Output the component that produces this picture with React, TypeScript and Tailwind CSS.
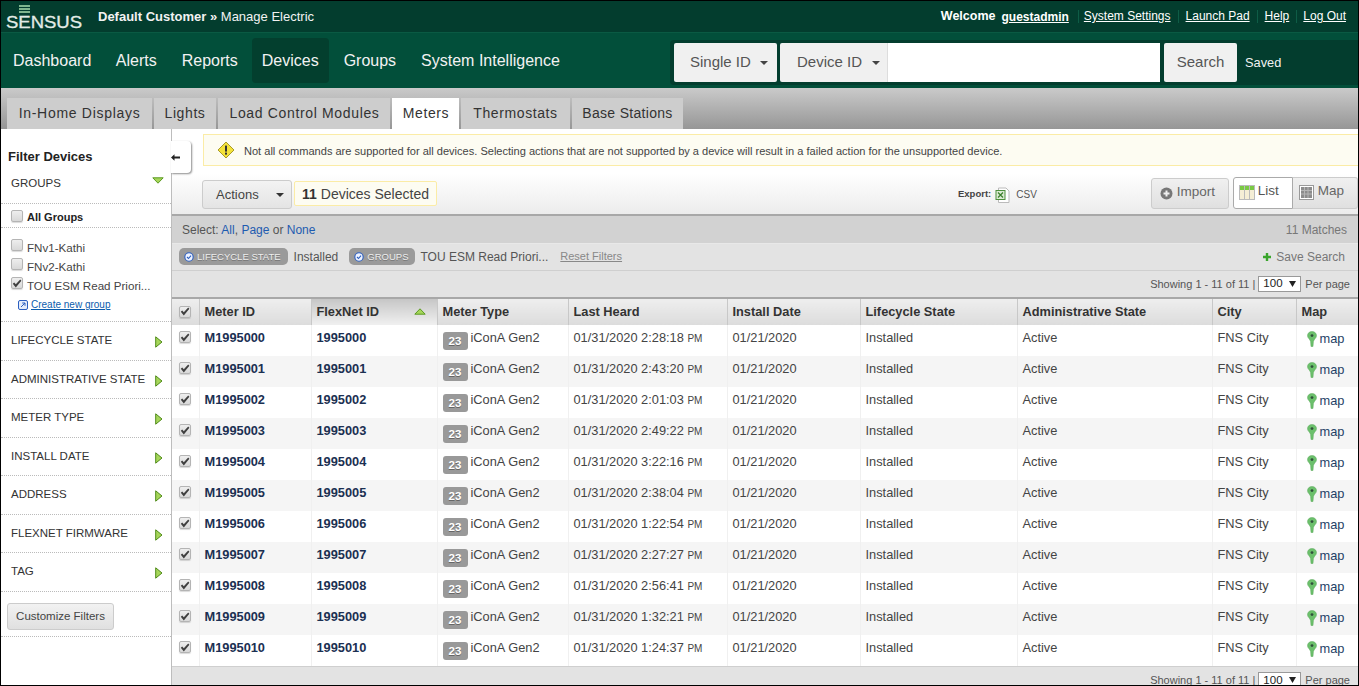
import React from "react";

const F = "[font-family:'Liberation_Sans',Arial,sans-serif]";

function Check({ on = true }: { on?: boolean }) {
  return (
    <span className="inline-flex w-[12px] h-[12px] items-center justify-center rounded-[2px] border border-[#b4b4b4] bg-[linear-gradient(#eeeeee,#d8d8d8)] shadow-[0_1px_1px_rgba(0,0,0,0.15)]">
      {on && (
        <svg width="10" height="9" viewBox="0 0 10 9">
          <path d="M0.8 4.8 L2.2 3.6 L3.8 5.2 L8.2 0.6 L9.4 1.8 L3.8 8.4 Z" fill="#3f3f3f" />
        </svg>
      )}
    </span>
  );
}

function Caret({ color = "#444" }: { color?: string }) {
  return (
    <svg width="8" height="4" viewBox="0 0 8 4" className="shrink-0">
      <path d="M0 0 H8 L4 4 Z" fill={color} />
    </svg>
  );
}

function GreenRight() {
  return (
    <svg width="8" height="12" viewBox="0 0 8 12" className="shrink-0">
      <path d="M0.7 0.8 L7 6 L0.7 11.2 Z" fill="#a6d65a" stroke="#4f8a1a" strokeWidth="1" />
    </svg>
  );
}

function GreenDown() {
  return (
    <svg width="12" height="7" viewBox="0 0 12 7" className="shrink-0">
      <path d="M0.8 0.8 H11.2 L6 6.2 Z" fill="#a6d65a" stroke="#5c9a22" strokeWidth="1" />
    </svg>
  );
}

function GreenUp() {
  return (
    <svg width="12" height="7" viewBox="0 0 12 7" className="shrink-0">
      <path d="M0.8 6.2 H11.2 L6 0.8 Z" fill="#a6d65a" stroke="#5c9a22" strokeWidth="1" />
    </svg>
  );
}

function Pin() {
  return (
    <svg width="10" height="16" viewBox="0 0 10 16" className="shrink-0">
      <path d="M5 0.5 C2.2 0.5 0.5 2.4 0.5 4.8 C0.5 7 3 8.2 3.6 10.5 L4 15.5 H6 L6.4 10.5 C7 8.2 9.5 7 9.5 4.8 C9.5 2.4 7.8 0.5 5 0.5 Z" fill="#6cc06c" stroke="#5aa85a" strokeWidth="0.5" />
      <circle cx="5" cy="4.6" r="1.4" fill="#2f4f3a" />
    </svg>
  );
}

function Badge() {
  return (
    <svg width="10" height="10" viewBox="0 0 10 10" className="shrink-0">
      <circle cx="5" cy="5" r="4.2" fill="#eef3ff" stroke="#2c5fc0" strokeWidth="1.1" />
      <path d="M3 5 L4.5 6.5 L7 3.6" fill="none" stroke="#2c5fc0" strokeWidth="1.1" />
    </svg>
  );
}

function Tag({ label }: { label: string }) {
  return (
    <span className="inline-flex items-center gap-[3px] h-[17px] pl-[5px] pr-[7px] rounded-[5px] bg-[#9a9a9a] text-[#eeeeee] text-[9.5px] leading-none [text-shadow:0_1px_0_#777]">
      <Badge />
      {label}
    </span>
  );
}

function Logo() {
  return (
    <div className="relative w-[78px] h-[32px] shrink-0">
      <div className="absolute left-[18px] top-[4px] flex flex-col gap-[1px]">
        <span className="block w-[11px] h-[2px] bg-[#7fb58e]" />
        <span className="block w-[11px] h-[2px] bg-[#7fb58e]" />
        <span className="block w-[11px] h-[2px] bg-[#7fb58e]" />
      </div>
      <svg width="84" height="32" viewBox="0 0 84 32" className="absolute left-0 top-0">
        <text x="5" y="27" textLength="76" lengthAdjust="spacingAndGlyphs" fontFamily="'Liberation Sans',Arial,sans-serif" fontSize="16" fill="#e2ebe6" stroke="#e2ebe6" strokeWidth="0.3">
          SENSUS
        </text>
      </svg>
    </div>
  );
}

function SideSection({ label }: { label: string }) {
  return (
    <div className="flex h-[38.5px] items-start justify-between pl-[10px] pr-[8px] pt-[11px] border-b border-dotted border-[#bbbbbb] text-[11.5px] text-[#333] whitespace-nowrap">
      <span className="leading-[16px] -mt-[1px]">{label}</span>
      <span className="mt-[3px]">
        <GreenRight />
      </span>
    </div>
  );
}

function GroupRow({ label, on }: { label: string; on?: boolean }) {
  return (
    <div className="flex items-start gap-[4px] h-[19px] pl-[10px] text-[11.6px] text-[#444] whitespace-nowrap">
      <span className="-mt-[1px] flex">
        <Check on={!!on} />
      </span>
      <span className="leading-[15px]">{label}</span>
    </div>
  );
}

const sections = ["LIFECYCLE STATE", "ADMINISTRATIVE STATE", "METER TYPE", "INSTALL DATE", "ADDRESS", "FLEXNET FIRMWARE", "TAG"];

const rows: [string, string][] = [
  ["0", "2:28:18"],
  ["1", "2:43:20"],
  ["2", "2:01:03"],
  ["3", "2:49:22"],
  ["4", "3:22:16"],
  ["5", "2:38:04"],
  ["6", "1:22:54"],
  ["7", "2:27:27"],
  ["8", "2:56:41"],
  ["9", "1:32:21"],
  ["10", "1:24:37"],
];

const tabs = [
  ["In-Home Displays", "w-[145px] tracking-[0.7px]"],
  ["Lights", "w-[62px] tracking-[0.6px]"],
  ["Load Control Modules", "w-[172px] tracking-[0.65px] pl-[1px]"],
  ["Meters", "w-[67px] tracking-[0.6px] pl-[1px]"],
  ["Thermostats", "w-[109px] tracking-[0.6px]"],
  ["Base Stations", "w-[111px] tracking-[0.3px]"],
];

function Paging() {
  return (
    <div className="flex items-center gap-[3px] text-[11px] text-[#555]">
      <span>Showing 1 - 11 of 11 |</span>
      <span className="inline-flex h-[16px] w-[43px] items-center justify-between border border-[#999] bg-white px-[4px] text-[11.5px] text-[#222] leading-none">
        100
        <svg width="7" height="6" viewBox="0 0 7 6">
          <path d="M0 0 H7 L3.5 6 Z" fill="#222" />
        </svg>
      </span>
      <span className="ml-[1px]">Per page</span>
    </div>
  );
}

const th = "h-[27px] pb-[1px] border-r border-[#c8c8c8] text-left font-bold text-[12.8px] text-[#333] pl-[5px] bg-[linear-gradient(#eeeeee,#dcdcdc)] align-middle";
const td = "h-[31px] align-top pt-[5px] pl-[5px] border-r border-[#f0f0f0] text-[12.8px] leading-[16px] whitespace-nowrap";
const tdGray = td + " text-[#444]";
const tdBold = td + " font-bold text-[#1b3052]";

export default function App() {
  return (
    <div className={`${F} relative flex flex-col w-[1359px] h-[686px] overflow-hidden border border-black bg-white`}>
      {/* top bar */}
      <div className="flex h-[32px] shrink-0 items-center bg-[#033d2e] border-b border-[#0a5a43] text-white">
        <Logo />
        <div className="ml-[19px] text-[13px] text-[#f2f2f2] whitespace-nowrap">
          <b>Default Customer »</b> Manage Electric
        </div>
        <div className="ml-auto flex items-center pr-[12px] text-[12px] text-white whitespace-nowrap">
          <b className="text-[12.5px]">Welcome</b>
          <b className="ml-[6px] underline">guestadmin</b>
          <span className="ml-[9px] pl-[5px] border-l border-[#0e5c46] underline leading-[13px]">System Settings</span>
          <span className="ml-[7px] pl-[7px] border-l border-[#0e5c46] underline leading-[13px]">Launch Pad</span>
          <span className="ml-[7px] pl-[7px] border-l border-[#0e5c46] underline leading-[13px]">Help</span>
          <span className="ml-[7px] pl-[6px] border-l border-[#0e5c46] underline leading-[13px]">Log Out</span>
        </div>
      </div>

      {/* nav */}
      <div className="flex h-[55px] shrink-0 items-start bg-[#024f3a] text-[16px] text-[#f2f2f2]">
        <div className="flex items-start">
          <span className="mt-[5px] h-[45px] flex items-center pl-[12px] pr-[12px]">Dashboard</span>
          <span className="mt-[5px] h-[45px] flex items-center px-[12.5px]">Alerts</span>
          <span className="mt-[5px] h-[45px] flex items-center pl-[12.5px] pr-[14px]">Reports</span>
          <span className="mt-[5px] h-[45px] flex items-center px-[10px] rounded-[4px] bg-[#033f2e]">Devices</span>
          <span className="mt-[5px] h-[45px] flex items-center pl-[15px] pr-[12.5px]">Groups</span>
          <span className="mt-[5px] h-[45px] flex items-center px-[12.5px]">System Intelligence</span>
        </div>
        <div className="ml-auto mt-[7px] flex h-[45px] w-[688px] items-center rounded-l-[4px] bg-[#033d2e] pl-[4px]">
          <div className="flex h-[39px] w-[103px] items-center gap-[9px] rounded-[2px] bg-[#f0f0f0] pl-[16px] text-[15px] text-[#555]">
            Single ID <Caret />
          </div>
          <div className="ml-[3px] flex h-[39px] w-[108px] items-center gap-[10px] rounded-l-[2px] bg-[#f0f0f0] border-r border-[#ddd] pl-[17px] text-[15px] text-[#555]">
            Device ID <Caret />
          </div>
          <div className="h-[39px] w-[272px] bg-white" />
          <div className="ml-[4px] flex h-[39px] w-[73px] items-center justify-center rounded-[2px] bg-[#f0f0f0] text-[15px] text-[#555]">Search</div>
          <span className="ml-[8px] text-[12.8px] text-[#f2f2f2]">Saved</span>
        </div>
      </div>

      {/* tabs */}
      <div className="flex h-[41px] shrink-0 items-end gap-[2px] bg-[linear-gradient(#cacaca,#969696)] pl-[6px]">
        {tabs.map(([t, w]) => (
          <div
            key={t}
            className={`${w} flex h-[31px] items-center justify-center text-[14px] text-[#333] ${t === "Meters" ? "bg-white" : "bg-[#cdcdcd]"}`}
          >
            {t}
          </div>
        ))}
      </div>

      <div className="relative flex min-h-0 flex-1">
        {/* sidebar */}
        <aside className="w-[171px] shrink-0 border-r border-[#bdbdbd] bg-white">
          <div className="pl-[7px] pt-[20px] text-[13px] font-bold leading-[16px] text-[#222]">Filter Devices</div>
          <div className="flex h-[39px] items-start justify-between border-b border-dotted border-[#bbb] pl-[10px] pr-[7px] pt-[10px] text-[11.5px] leading-[16px] text-[#333]">
            <span>GROUPS</span>
            <span className="mt-[2px] flex"><GreenDown /></span>
          </div>
          <div className="flex h-[24px] items-center gap-[4px] border-b border-dotted border-[#bbb] pl-[10px] pt-[4px] text-[11px] font-bold text-[#222]">
            <span className="-mt-[3px] flex"><Check on={false} /></span>
            <span>All Groups</span>
          </div>
          <div className="h-[94px] border-b border-dotted border-[#bbb] pt-[12px]">
            <GroupRow label="FNv1-Kathi" />
            <GroupRow label="FNv2-Kathi" />
            <GroupRow label="TOU ESM Read Priori..." on />
            <div className="flex items-center gap-[3px] pl-[17px] text-[10px] text-[#0b5cad] underline">
              <svg width="10" height="10" viewBox="0 0 10 10" className="shrink-0">
                <rect x="0.5" y="0.5" width="9" height="9" rx="1.5" fill="#e4ecfa" stroke="#2c5fc0" />
                <path d="M3 7 L7 3 M4.2 3 H7 V5.8" fill="none" stroke="#2c5fc0" />
              </svg>
              Create new group
            </div>
          </div>
          {sections.map((s) => (
            <SideSection key={s} label={s} />
          ))}
          <div className="h-[45px] border-b border-dotted border-[#bbb] pl-[6px] pt-[11px]">
            <div className="flex h-[27px] w-[107px] items-center justify-center rounded-[3px] border border-[#ccc] bg-[linear-gradient(#f2f2f2,#e0e0e0)] pt-[2px] text-[11.5px] text-[#444]">
              Customize Filters
            </div>
          </div>
        </aside>

        {/* collapse tab */}
        <div className="absolute left-[170px] top-[12px] z-10 flex h-[32px] w-[20px] items-center justify-start rounded-r-[4px] bg-white shadow-[1px_1px_2px_rgba(0,0,0,0.45)]">
          <svg width="9" height="7" viewBox="0 0 9 7">
            <path d="M0 3.5 L3.5 0.3 V2.4 H9 V4.6 H3.5 V6.7 Z" fill="#222" />
          </svg>
        </div>

        {/* main */}
        <main className="flex min-w-0 flex-1 flex-col">
          <div className="h-[5px]" />
          <div className="ml-[31px] flex h-[32px] shrink-0 items-center border-y border-l border-[#fbeca6] bg-[#fdfcf2] pl-[13px] text-[11.05px] text-[#444]">
            <svg width="18" height="18" viewBox="0 0 18 18" className="shrink-0">
              <path d="M9 1 L17 9 L9 17 L1 9 Z" fill="#f4e23a" stroke="#a89a2a" strokeWidth="1" strokeLinejoin="round" />
              <rect x="8" y="4.6" width="2" height="6" fill="#333" />
              <rect x="8" y="11.6" width="2" height="2" fill="#333" />
            </svg>
            <span className="ml-[9px] mt-[2px]">Not all commands are supported for all devices. Selecting actions that are not supported by a device will result in a failed action for the unsupported device.</span>
          </div>

          <div className="flex h-[50px] shrink-0 items-center border-b-2 border-[#a8a8a8] bg-[linear-gradient(#ffffff_15%,#ececec)] pl-[30px]">
            <div className="mt-[9px] flex h-[29px] w-[90px] items-center justify-between rounded-[3px] border border-[#ccc] bg-[linear-gradient(#f3f3f3,#e4e4e4)] pl-[13px] pr-[7px] text-[13px] text-[#444]">
              Actions <Caret color="#333" />
            </div>
            <div className="ml-[2px] mt-[7px] flex h-[25px] w-[143px] items-center justify-center rounded-[2px] border border-[#fbeca6] bg-[#fdfcf2] pt-[1px] text-[14px] text-[#444] whitespace-nowrap">
              <b className="mr-[4px] text-[#333]">11</b> Devices Selected
            </div>
            <b className="ml-[521px] text-[9.5px] text-[#444] mt-[9px]">Export:</b>
            <svg width="16" height="17" viewBox="0 0 16 17" className="ml-[4px] mt-[11px] shrink-0">
              <path d="M3.5 1 H11 L14 4 V15.5 H3.5 Z" fill="#fff" stroke="#bbb" />
              <rect x="1" y="3.5" width="9" height="9" fill="#dcebd4" stroke="#4d8f3d" />
              <path d="M3 5.5 L8 10.5 M8 5.5 L3 10.5" stroke="#3a7f2c" strokeWidth="1.2" />
            </svg>
            <span className="ml-[5px] mt-[9px] text-[10px] text-[#555]">CSV</span>
            <div className="ml-[114px] mt-[7px] flex h-[31px] w-[78px] items-center gap-[4px] rounded-[3px] border border-[#ccc] bg-[linear-gradient(#f0f0f0,#e0e0e0)] pb-[3px] pl-[8px] text-[13.5px] text-[#666]">
              <svg width="13" height="13" viewBox="0 0 13 13" className="mt-[2px]">
                <circle cx="6.5" cy="6.5" r="6" fill="#777" />
                <path d="M6.5 3.5 V9.5 M3.5 6.5 H9.5" stroke="#eee" strokeWidth="2" />
              </svg>
              Import
            </div>
            <div className="ml-[4px] mt-[6px] flex h-[32px] w-[60px] items-center gap-[3px] rounded-l-[3px] border border-[#aaa] bg-white pb-[3px] pl-[5px] text-[13.5px] text-[#555]">
              <svg width="16" height="15" viewBox="0 0 16 15" className="mt-[2px]">
                <rect x="0.5" y="0.5" width="15" height="14" fill="#f5eed5" stroke="#bbb" />
                <rect x="1" y="1" width="14" height="4" fill="#7ac943" />
                <path d="M5.5 1 V14 M10.5 1 V14" stroke="#bbb" />
              </svg>
              List
            </div>
            <div className="mt-[6px] flex h-[32px] w-[65px] items-center gap-[4px] rounded-r-[3px] border-y border-r border-[#ccc] bg-[linear-gradient(#f0f0f0,#e0e0e0)] pb-[3px] pl-[6px] text-[13.5px] text-[#666]">
              <svg width="15" height="15" viewBox="0 0 15 15" className="mt-[2px]">
                <rect x="0.5" y="0.5" width="14" height="14" fill="#fff" stroke="#999" />
                <rect x="2" y="2" width="11" height="11" fill="#8c8c8c" />
                <path d="M2 5.5 H13 M2 9 H13 M5.5 2 V13 M9 2 V13" stroke="#b5b5b5" />
              </svg>
              Map
            </div>
          </div>

          <div className="flex h-[28px] shrink-0 items-center justify-between border-b border-[#e8e8e8] bg-[#d2d2d2] pl-[10px] pr-[11px] text-[12px] text-[#555]">
            <span>
              Select: <span className="text-[#1e5bb0]">All</span>, <span className="text-[#1e5bb0]">Page</span> or <span className="text-[#1e5bb0]">None</span>
            </span>
            <span className="text-[#777]">11 Matches</span>
          </div>

          <div className="flex h-[27px] shrink-0 items-center border-b border-[#cfcfcf] bg-[#e3e3e3] pb-[1px] pl-[7px] pr-[13px] text-[12px] text-[#555]">
            <Tag label="LIFECYCLE STATE" />
            <span className="ml-[6px]">Installed</span>
            <span className="ml-[11px] flex"><Tag label="GROUPS" /></span>
            <span className="ml-[5px]">TOU ESM Read Priori...</span>
            <span className="ml-[12px] text-[11px] text-[#888] underline">Reset Filters</span>
            <span className="ml-auto flex items-center gap-[5px] text-[#777]">
              <svg width="8" height="8" viewBox="0 0 8 8">
                <path d="M2.8 0 H5.2 V2.8 H8 V5.2 H5.2 V8 H2.8 V5.2 H0 V2.8 H2.8 Z" fill="#3aa52c" />
              </svg>
              Save Search
            </span>
          </div>

          <div className="flex h-[26px] shrink-0 items-center justify-end bg-[#e3e3e3] pr-[8px]">
            <Paging />
          </div>

          <table className="w-[1186px] shrink-0 table-fixed border-collapse border-t-2 border-[#a8a8a8]">
            <colgroup>
              <col className="w-[27px]" />
              <col className="w-[112px]" />
              <col className="w-[126px]" />
              <col className="w-[131px]" />
              <col className="w-[159px]" />
              <col className="w-[133px]" />
              <col className="w-[157px]" />
              <col className="w-[195px]" />
              <col className="w-[84px]" />
              <col className="w-[62px]" />
            </colgroup>
            <thead>
              <tr>
                <th className={th + " pl-[7px]"}><span className="flex"><Check /></span></th>
                <th className={th}>Meter ID</th>
                <th className="h-[27px] border-r border-[#c8c8c8] pb-[1px] pl-[5px] pr-[11px] text-left text-[12.8px] font-bold text-[#333] bg-[linear-gradient(#c6c6c6,#f0f0f0)]">
                  <span className="flex items-center justify-between">FlexNet ID <GreenUp /></span>
                </th>
                <th className={th}>Meter Type</th>
                <th className={th}>Last Heard</th>
                <th className={th}>Install Date</th>
                <th className={th}>Lifecycle State</th>
                <th className={th}>Administrative State</th>
                <th className={th}>City</th>
                <th className={th}>Map</th>
              </tr>
            </thead>
            <tbody>
              {rows.map(([n, t], i) => (
                <tr key={n} className={i % 2 ? "bg-[#f5f5f5]" : "bg-white"}>
                  <td className={td + " pl-[7px]"}><span className="flex mt-[1px]"><Check /></span></td>
                  <td className={tdBold}>M{1995000 + Number(n)}</td>
                  <td className={tdBold}>{1995000 + Number(n)}</td>
                  <td className={tdGray}>
                    <span className="flex items-start gap-[3px]">
                      <span className="mt-[2px] flex h-[18px] w-[25px] items-center justify-center rounded-[3px] bg-[#999] text-[11.5px] font-bold text-white [text-shadow:0_1px_0_#666]">23</span>
                      iConA Gen2
                    </span>
                  </td>
                  <td className={tdGray}>01/31/2020 {t} <span className="text-[10px]">PM</span></td>
                  <td className={tdGray}>01/21/2020</td>
                  <td className={tdGray}>Installed</td>
                  <td className={tdGray}>Active</td>
                  <td className={tdGray}>FNS City</td>
                  <td className={td + " !border-r-0"}>
                    <span className="flex items-start gap-[3px] pl-[5px] text-[#1f3f66]">
                      <span className="mt-[1px]"><Pin /></span>
                      <span className="mt-[1px]">map</span>
                    </span>
                  </td>
                </tr>
              ))}
            </tbody>
          </table>

          <div className="flex min-h-0 flex-1 items-start justify-end border-t border-[#cfcfcf] bg-[#e3e3e3] pr-[8px] pt-[5px]">
            <Paging />
          </div>
        </main>
      </div>
    </div>
  );
}
